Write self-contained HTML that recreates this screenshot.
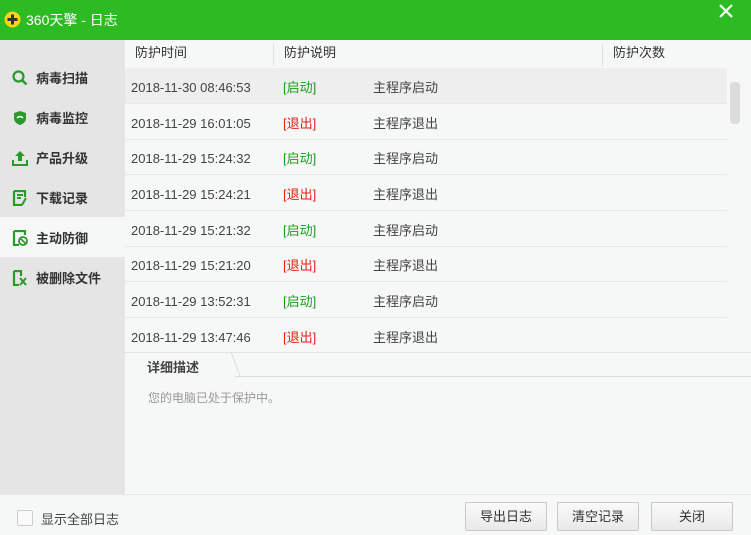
<!DOCTYPE html><html><head><meta charset="utf-8"><style>
body{margin:0;width:751px;height:535px;overflow:hidden;font-family:"Liberation Sans","Noto Sans CJK SC",sans-serif;font-size:13px;color:#333;background:#f6f7f7;position:relative}
.title{position:absolute;left:0;top:0;width:751px;height:40px;background:#2cbb22;color:#fff}
.title .t{position:absolute;left:26px;top:10px;font-size:14px}
.side{position:absolute;left:0;top:40px;width:125px;height:454px;background:#e5e5e5}
.it{position:absolute;left:0;width:125px;height:40px;font-size:13px;font-weight:bold;color:#333}
.it span{position:absolute;left:36px;top:11px}
.it svg{position:absolute;left:12px;top:13px}
.main{position:absolute;left:125px;top:40px;width:626px;height:454px;background:#f6f7f7}
.hd{position:absolute;top:0;height:28px;line-height:26px;font-size:13px;color:#333}
.row{position:absolute;left:0;width:602px;height:35px;border-bottom:1px solid #e8e8e8;color:#444}
.row div{position:absolute;top:2px;height:36px;line-height:36px}
.g{color:#1a9e1a}.r{color:#e0241a}
.btn{position:absolute;top:502px;width:80px;height:27px;border:1px solid #c9c9c9;background:linear-gradient(#fafafa,#e9e9e9);text-align:center;line-height:27px;font-size:13px;color:#333;border-radius:2px}
</style></head><body>
<div class="title"><svg style="position:absolute;left:4px;top:11px" width="17" height="17" viewBox="0 0 17 17"><circle cx="8.5" cy="8.5" r="8" fill="#f7d417"/><path d="M8.5 3.5v10M3.5 8.5h10" stroke="#333" stroke-width="3"/></svg><div class="t">360天擎 - 日志</div>
<svg style="position:absolute;left:719px;top:4px" width="14" height="14"><path d="M1 1L13 13M13 1L1 13" stroke="#fff" stroke-width="2.2"/></svg></div>
<div class="side">
<div class="it" style="top:17px"><svg width="16" height="16"><circle cx="6.5" cy="6.5" r="5" fill="none" stroke="#2a9a2a" stroke-width="2.2"/><path d="M10 10l4.5 4.5" stroke="#2a9a2a" stroke-width="2.5"/></svg><span>病毒扫描</span></div>
<div class="it" style="top:57px"><svg width="16" height="16"><path d="M8 1L14 3v5c0 4-3 6-6 7-3-1-6-3-6-7V3z" fill="#2a9a2a"/><path d="M5 8c2-2 4-2 6 0" stroke="#fff" stroke-width="1.5" fill="none"/></svg><span>病毒监控</span></div>
<div class="it" style="top:97px"><svg width="16" height="16"><path d="M8 1l5 5H10v5H6V6H3z" fill="#2a9a2a"/><path d="M1 10v5h14v-5" stroke="#2a9a2a" stroke-width="2" fill="none"/></svg><span>产品升级</span></div>
<div class="it" style="top:137px"><svg width="16" height="16"><path d="M2 1h11v6M2 1v14h8" stroke="#2a9a2a" stroke-width="2.2" fill="none"/><path d="M5 5h6M5 8h4M14 8l-4 7" stroke="#2a9a2a" stroke-width="2"/></svg><span>下载记录</span></div>
<div class="it" style="top:177px;background:#f6f7f7"><svg width="16" height="16"><path d="M2 1h11v4M2 1v14h5" stroke="#2a9a2a" stroke-width="2.2" fill="none"/><circle cx="11" cy="11" r="4" fill="none" stroke="#2a9a2a" stroke-width="1.8"/><path d="M8.5 8.5l5 5" stroke="#2a9a2a" stroke-width="1.6"/></svg><span>主动防御</span></div>
<div class="it" style="top:217px"><svg width="16" height="16"><path d="M2 1v14h5M2 1h7v5" stroke="#2a9a2a" stroke-width="2.2" fill="none"/><path d="M8 8l6 7M14 8l-6 7" stroke="#2a9a2a" stroke-width="2"/></svg><span>被删除文件</span></div>
</div>
<div class="main">
<div class="hd" style="left:10px">防护时间</div>
<div style="position:absolute;left:148px;top:4px;width:1px;height:22px;background:#e0e0e0"></div>
<div class="hd" style="left:159px">防护说明</div>
<div style="position:absolute;left:477px;top:4px;width:1px;height:22px;background:#e0e0e0"></div>
<div class="hd" style="left:488px">防护次数</div>
<div class="row" style="top:28px;background:#eeeeee"><div style="left:6px">2018-11-30 08:46:53</div><div class="g" style="left:158px">[启动]</div><div style="left:248px">主程序启动</div></div>
<div class="row" style="top:64px"><div style="left:6px">2018-11-29 16:01:05</div><div class="r" style="left:158px">[退出]</div><div style="left:248px">主程序退出</div></div>
<div class="row" style="top:99px"><div style="left:6px">2018-11-29 15:24:32</div><div class="g" style="left:158px">[启动]</div><div style="left:248px">主程序启动</div></div>
<div class="row" style="top:135px"><div style="left:6px">2018-11-29 15:24:21</div><div class="r" style="left:158px">[退出]</div><div style="left:248px">主程序退出</div></div>
<div class="row" style="top:171px"><div style="left:6px">2018-11-29 15:21:32</div><div class="g" style="left:158px">[启动]</div><div style="left:248px">主程序启动</div></div>
<div class="row" style="top:206px"><div style="left:6px">2018-11-29 15:21:20</div><div class="r" style="left:158px">[退出]</div><div style="left:248px">主程序退出</div></div>
<div class="row" style="top:242px"><div style="left:6px">2018-11-29 13:52:31</div><div class="g" style="left:158px">[启动]</div><div style="left:248px">主程序启动</div></div>
<div class="row" style="top:278px;border:none"><div style="left:6px">2018-11-29 13:47:46</div><div class="r" style="left:158px">[退出]</div><div style="left:248px">主程序退出</div></div>
<div style="position:absolute;left:605px;top:42px;width:10px;height:42px;background:#dcdcdc;border-radius:4px"></div>
<div style="position:absolute;left:0;top:312px;width:626px;height:1px;background:#e3e3e3"></div>
<div style="position:absolute;left:110px;top:336px;width:516px;height:1px;background:#dcdcdc"></div>
<svg style="position:absolute;left:106px;top:312px" width="10" height="25"><path d="M0 0L9 24" stroke="#dcdcdc"/></svg>
<div style="position:absolute;left:22px;top:317px;font-size:13px;font-weight:bold;color:#444">详细描述</div>
<div style="position:absolute;left:23px;top:349px;font-size:12px;color:#999">您的电脑已处于保护中。</div>
</div>
<div style="position:absolute;left:0;top:494px;width:751px;height:1px;background:#e6e6e6"></div>
<div style="position:absolute;left:17px;top:510px;width:14px;height:14px;border:1px solid #ccc;background:#fafafa;border-radius:2px"></div>
<div style="position:absolute;left:41px;top:509px;font-size:13px;color:#444">显示全部日志</div>
<div class="btn" style="left:465px">导出日志</div>
<div class="btn" style="left:557px">清空记录</div>
<div class="btn" style="left:651px">关闭</div>
</body></html>
